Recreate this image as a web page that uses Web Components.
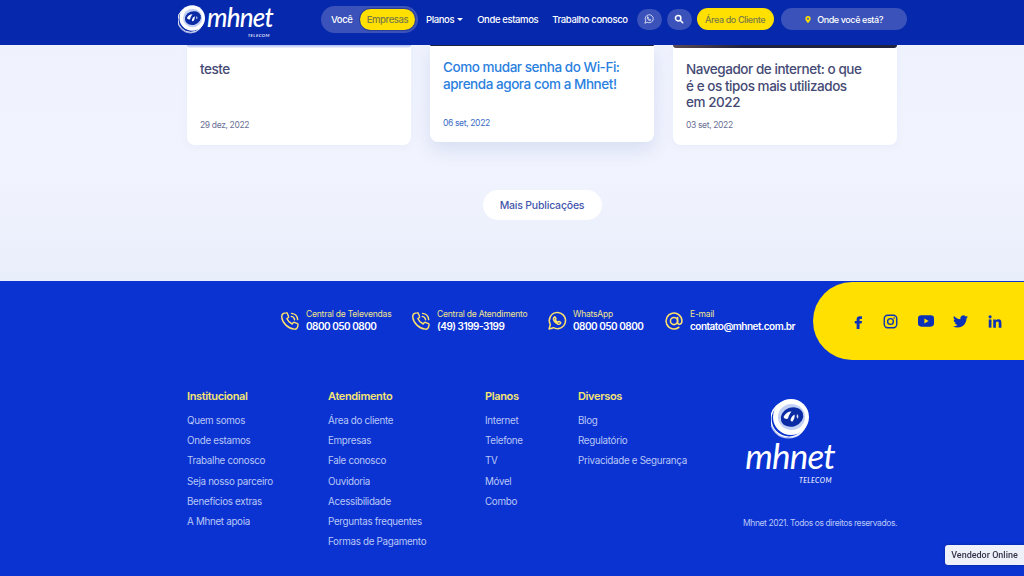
<!DOCTYPE html>
<html lang="pt-BR">
<head>
<meta charset="utf-8">
<title>Mhnet</title>
<style>
html,body{margin:0;padding:0;}
body{font-family:Inter,"Open Sans",sans-serif;background:#0b33d2;}
</style>
</head>
<body>
<site-header></site-header>
<blog-section>
  <blog-card date="29 dez, 2022" strip="linear-gradient(#a9bcf2,#f3f5fd)">teste</blog-card>
  <blog-card date="06 set, 2022" strip="#1d2340" active>Como mudar senha do Wi-Fi: aprenda agora com a Mhnet!</blog-card>
  <blog-card date="03 set, 2022" strip="linear-gradient(90deg,#5a4a50,#20233f 30%)" tall>Navegador de internet: o que é e os tipos mais utilizados em 2022</blog-card>
</blog-section>
<site-footer></site-footer>
<seller-button>Vendedor Online</seller-button>

<script>
const icons={
  phone:`<svg viewBox="0 0 24 24" fill="none" stroke="currentColor" stroke-width="1.7" stroke-linecap="round" stroke-linejoin="round"><path d="M5.2 2.6 7.6 2.2c.5-.1 1 .2 1.2.7l1.5 3.7c.2.4 0 .9-.3 1.200L8.300 9.200c1.100 2.600 3.500 5 6.300 6.400l1.500-1.700c.3-.3.8-.4 1.200-.3l3.700 1.500c.5.2.8.7.700 1.200l-.5 2.500c-.4 1.900-2.100 3.300-4 3C9.800 21.200 2.900 14.300 2.100 7.300 1.900 5 3.200 3 5.200 2.600z"/><path d="M13.500 6.500c2.200.3 3.700 1.800 4 4M13.800 2.900c4.200.4 7 3.200 7.400 7.400"/></svg>`,
  whats:`<svg viewBox="0 0 24 24" fill="none" stroke="currentColor" stroke-width="1.800" stroke-linecap="round" stroke-linejoin="round"><path d="M2.500 21.500 4 16.200A9.700 9.700 0 1 1 7.800 20z"/><path d="M9 7.500c-1.300.7-1.500 2.200-.8 3.700 1 2 2.600 3.500 4.700 4.400 1.500.6 3 .2 3.500-1.100.2-.5 0-.9-.4-1.100l-1.500-.8c-.4-.2-.7-.1-1 .2l-.5.600c-1.300-.5-2.400-1.500-3-2.800l.5-.6c.3-.3.3-.6.2-1l-.7-1.500c-.1-.5-.6-.7-1-.5z"/></svg>`,
  search:`<svg viewBox="0 0 24 24" fill="none" stroke="currentColor" stroke-width="3.600" stroke-linecap="round"><circle cx="10" cy="10" r="6.500"/><path d="m15.500 15.500 5.500 5.500"/></svg>`,
  pin:`<svg viewBox="0 0 24 24" fill="currentColor"><path fill-rule="evenodd" d="M12 1.500a8 8 0 0 0-8 8c0 5.500 8 13 8 13s8-7.500 8-13a8 8 0 0 0-8-8zm0 5a3 3 0 1 1 0 6 3 3 0 0 1 0-6z"/></svg>`,
  at:`<svg viewBox="0 0 24 24" fill="none" stroke="currentColor" stroke-width="1.900" stroke-linecap="round"><circle cx="12" cy="12" r="4.300"/><path d="M16.300 7.700v6c0 3.100 5.200 3.300 5.200-1.700a9.500 9.500 0 1 0-3.700 7.500"/></svg>`,
  fb:`<svg class="fb" viewBox="6 0 13 24" fill="currentColor"><path d="M14.500 8H18V3.500h-3.500C11.500 3.500 9.500 5.500 9.500 8.500V11H6.500v4.300h3V24h4.700v-8.700h3.200l.8-4.300h-4V8.900c0-.6.300-.9.800-.9z"/></svg>`,
  ig:`<svg class="ig" viewBox="0 0 24 24" fill="none" stroke="currentColor" stroke-width="2.200"><rect x="2" y="2" width="20" height="20" rx="5.500"/><circle cx="12" cy="12" r="4.600"/><circle cx="17.700" cy="6.300" r=".7" fill="currentColor" stroke-width="1"/></svg>`,
  yt:`<svg class="yt" viewBox="0 3 24 18"><rect x="0" y="3.500" width="24" height="17" rx="5" fill="currentColor"/><path d="M9.600 8.200v7.600l6.400-3.800z" fill="#ffe000"/></svg>`,
  tw:`<svg class="tw" viewBox="0 0 24 24" fill="currentColor"><path d="M23.953 4.570a10 10 0 0 1-2.825.775 4.958 4.958 0 0 0 2.163-2.723c-.951.555-2.005.959-3.127 1.184a4.920 4.920 0 0 0-8.384 4.482C7.690 8.095 4.067 6.130 1.640 3.162a4.822 4.822 0 0 0-.666 2.475c0 1.710.870 3.213 2.188 4.096a4.904 4.904 0 0 1-2.228-.616v.060a4.923 4.923 0 0 0 3.946 4.827 4.996 4.996 0 0 1-2.212.085 4.936 4.936 0 0 0 4.604 3.417 9.867 9.867 0 0 1-6.102 2.105c-.390 0-.779-.023-1.170-.067a13.995 13.995 0 0 0 7.557 2.209c9.053 0 13.998-7.496 13.998-13.985 0-.210 0-.420-.015-.630A9.935 9.935 0 0 0 24 4.590z"/></svg>`,
  li:`<svg class="li" viewBox="0 0 24 24" fill="currentColor"><circle cx="3.600" cy="4" r="2.700"/><rect x="1.300" y="8.500" width="4.600" height="14"/><path d="M9 8.500h4.400v2c.8-1.400 2.300-2.400 4.500-2.400 4.300 0 5.100 2.800 5.100 6.500v7.900h-4.600v-7c0-1.700 0-3.700-2.300-3.700s-2.600 1.800-2.600 3.600v7.100H9z"/></svg>`
};

class MhnetLogo extends HTMLElement{
  constructor(){
    super();
    this.attachShadow({mode:'open'});
    const stacked=this.hasAttribute('stacked');
    this.shadowRoot.innerHTML=`
    <style>
    :host{display:block;color:#fff;}
    .wrap{display:flex;align-items:center;gap:${stacked?'0':'2px'};flex-direction:${stacked?'column':'row'};}
    svg{display:block;flex:none;width:${stacked?'38px':'27px'};height:${stacked?'40px':'29px'};}
    .word{display:flex;flex-direction:column;align-items:flex-end;font-family:Lato,"Liberation Sans",sans-serif;font-style:italic;${stacked?'margin-top:-5.500px;':''}}
    .name{font-size:${stacked?'35px':'26px'};letter-spacing:-.8px;line-height:normal;}
    .sub{font-size:${stacked?'7px':'4.500px'};line-height:normal;letter-spacing:.4px;padding-right:3px;}
    </style>
    <div class="wrap">
      <svg viewBox="0 0 38 40">
        <g fill="none" stroke="#fff" stroke-width="1.200">
          <circle cx="18" cy="20" r="18"/>
          <circle cx="17.500" cy="21" r="18" opacity=".7"/>
        </g>
        <circle cx="20" cy="18" r="18" fill="#fff"/>
        <ellipse cx="20.500" cy="18" rx="13.500" ry="13" fill="#c3d0f6"/>
        <ellipse cx="21" cy="18" rx="11.500" ry="9.500" fill="#0a2ba3" transform="rotate(-20 21 18)"/>
        <path d="M12.500 18c1.500-3.500 4.500-5.500 8-5.500-1.500 2-3 4-3.500 7-1.500.8-3.500.5-4.500-1.500z" fill="#fff"/>
        <path d="M19.500 21c.5-2.500 2-4.500 4-5.500.5 2-.2 5-2 7-1 .2-1.800-.5-2-1.500z" fill="#fff"/>
        <path d="M26 15c1.500 1 1.700 3 .8 4.800-.6-.6-1-1.200-1.200-2z" fill="#fff" opacity=".85"/>
      </svg>
      <div class="word"><span class="name">mhnet</span><span class="sub">TELECOM</span></div>
    </div>`;
  }
}
customElements.define('mhnet-logo',MhnetLogo);

class SiteHeader extends HTMLElement{
  constructor(){
    super();
    this.attachShadow({mode:'open'});
    this.shadowRoot.innerHTML=`
    <style>
    :host{display:block;position:fixed;top:0;left:0;right:0;height:45px;background:#0528ad;z-index:5;}
    nav{display:flex;align-items:center;height:38px;padding-left:178px;font-size:9.500px;font-weight:500;letter-spacing:-.38px;color:#fff;}
    mhnet-logo{width:94px;margin-right:49px;}
    .toggle{display:flex;align-items:center;width:97px;height:27px;box-sizing:border-box;border-radius:14px;background:#3a52b9;padding-left:10px;}
    .toggle b{font-weight:500;width:29px;}
    .toggle span{width:55px;height:21px;border-radius:11px;background:#ffe000;color:#787a48;display:flex;align-items:center;justify-content:center;box-shadow:0 0 0 1px #2b3f96;}
    .link{margin-left:14px;white-space:nowrap;}
    .link i{display:inline-block;border:3px solid transparent;border-top-color:#fff;border-bottom:0;margin-left:3px;vertical-align:2px;}
    .round{flex:none;width:25px;height:21px;border-radius:11px;background:#3a52b9;display:flex;align-items:center;justify-content:center;margin-left:5px;}
    .round svg{width:10px;height:10px;}
    .client{flex:none;width:77px;height:22px;margin-left:5px;border-radius:11px;background:#ffe000;color:#787a48;display:flex;align-items:center;justify-content:center;white-space:nowrap;font-size:9px;letter-spacing:-.4px;}
    .where{flex:none;width:126px;height:22px;margin-left:7px;border-radius:11px;background:#3a52b9;display:flex;align-items:center;justify-content:center;gap:5px;font-size:9px;letter-spacing:-.4px;white-space:nowrap;}
    .where svg{width:8px;height:9px;color:#ffe000;}
    .right{display:flex;align-items:center;margin-left:9px;}
    .right>:first-child{margin-left:0;}
    </style>
    <nav>
      <mhnet-logo></mhnet-logo>
      <div class="toggle"><b>Você</b><span>Empresas</span></div>
      <a class="link" style="margin-left:8px">Planos<i></i></a>
      <a class="link">Onde estamos</a>
      <a class="link">Trabalho conosco</a>
      <div class="right">
        <div class="round">${icons.whats}</div>
        <div class="round">${icons.search}</div>
        <div class="client">Área do Cliente</div>
        <div class="where">${icons.pin}<span>Onde você está?</span></div>
      </div>
    </nav>`;
  }
}
customElements.define('site-header',SiteHeader);

class BlogSection extends HTMLElement{
  constructor(){
    super();
    this.attachShadow({mode:'open'});
    this.shadowRoot.innerHTML=`
    <style>
    :host{display:block;height:281px;box-sizing:border-box;padding:45px 0 0 187px;background:linear-gradient(#eef2fd,#f1f4fe 60%,#e9eefb);}
    .inner{width:710px;}
    .cards{display:grid;grid-template-columns:repeat(3,224px);column-gap:19px;align-items:start;}
    .more{display:flex;justify-content:center;margin-top:45px;}
    .more a{display:flex;align-items:center;justify-content:center;width:119px;height:30px;border-radius:15px;background:#fff;color:#4356ad;font-size:10.500px;font-weight:500;letter-spacing:-.2px;}
    </style>
    <div class="inner">
      <div class="cards"><slot></slot></div>
      <div class="more"><a>Mais Publicações</a></div>
    </div>`;
  }
}
customElements.define('blog-section',BlogSection);

class BlogCard extends HTMLElement{
  constructor(){
    super();
    this.attachShadow({mode:'open'});
    const active=this.hasAttribute('active');
    this.shadowRoot.innerHTML=`
    <style>
    :host{display:block;height:${active?'97px':'100px'};background:#fff;border-radius:0 0 8px 8px;box-shadow:${active?'0 8px 18px rgba(70,90,170,.14)':'0 2px 8px rgba(70,90,170,.05)'};overflow:hidden;}
    .strip{height:${active?'1px':'3px'};background:${this.getAttribute('strip')};border-radius:0 0 5px 5px;}
    .body{display:flex;flex-direction:column;box-sizing:border-box;padding:13px 13px 0 13px;}
    h3{margin:0;font-size:13.500px;line-height:16.700px;font-weight:500;letter-spacing:-.45px;color:${active?'#2b7fe0':'#454a74'};height:51px;${this.hasAttribute('tall')?'padding-right:18px;':''}}
    time{margin-top:7px;font-size:8.500px;letter-spacing:-.35px;color:${active?'#3a6bc6':'#6a6f94'};line-height:12px;}
    </style>
    <div class="strip"></div>
    <div class="body"><h3><slot></slot></h3><time>${this.getAttribute('date')}</time></div>`;
  }
}
customElements.define('blog-card',BlogCard);

class ContactItem extends HTMLElement{
  constructor(){
    super();
    this.attachShadow({mode:'open'});
    this.shadowRoot.innerHTML=`
    <style>
    :host{display:flex;align-items:center;gap:6px;white-space:nowrap;}
    svg{display:block;width:20px;height:20px;color:#ffe36a;flex:none;}
    div{display:flex;flex-direction:column;}
    small{font-size:8.500px;line-height:11px;letter-spacing:-.2px;color:#f1e58a;}
    strong{font-size:10px;line-height:13px;font-weight:600;letter-spacing:-.5px;color:#fff;}
    </style>
    ${icons[this.getAttribute('icon')]}
    <div><small>${this.getAttribute('label')}</small><strong>${this.getAttribute('value')}</strong></div>`;
  }
}
customElements.define('contact-item',ContactItem);

class FooterCol extends HTMLElement{
  constructor(){
    super();
    this.attachShadow({mode:'open'});
    const links=this.getAttribute('links').split('|').map(l=>`<li>${l}</li>`).join('');
    this.shadowRoot.innerHTML=`
    <style>
    :host{display:block;white-space:nowrap;}
    h4{margin:0 0 7px;font-size:11px;line-height:16px;font-weight:600;letter-spacing:-.35px;color:#f6e572;}
    ul{list-style:none;margin:0;padding:0;}
    li{font-size:9.800px;line-height:20.200px;letter-spacing:-.3px;color:#b9c7f6;}
    </style>
    <h4>${this.getAttribute('title')}</h4><ul>${links}</ul>`;
  }
}
customElements.define('footer-col',FooterCol);

class SiteFooter extends HTMLElement{
  constructor(){
    super();
    this.attachShadow({mode:'open'});
    this.shadowRoot.innerHTML=`
    <style>
    :host{display:block;height:295px;background:#0b33d2;overflow:hidden;}
    .top{display:flex;align-items:center;height:79px;padding-left:280px;}
    contact-item:nth-child(1){width:131px;}
    contact-item:nth-child(2){width:136px;}
    contact-item:nth-child(3){width:117px;}
    contact-item:nth-child(4){width:149px;}
    .social{display:flex;align-items:center;gap:20px;box-sizing:border-box;width:211px;height:78px;margin-top:1px;border-radius:39px 0 0 39px;background:#ffe000;padding-left:41px;color:#0a31b8;}
    .social svg{display:block;flex:none;height:15px;}
    .social .fb{width:9px;}
    .social .ig{width:15px;}
    .social .yt{width:16px;height:12px;margin-right:-1px;}
    .social .tw{width:15px;}
    .social .li{width:14px;}
    .main{display:grid;grid-template-columns:141px 157px 93px 165px 1fr;padding:28px 127px 0 187px;}
    .brand{display:flex;flex-direction:column;height:141px;}
    mhnet-logo{margin:11px 0 0 2px;width:90px;}
    .brand p{margin:auto 0 0;font-size:8.500px;line-height:12px;letter-spacing:-.4px;color:#b9c7f6;white-space:nowrap;}
    </style>
    <div class="top">
      <contact-item icon="phone" label="Central de Televendas" value="0800 050 0800"></contact-item>
      <contact-item icon="phone" label="Central de Atendimento" value="(49) 3199-3199"></contact-item>
      <contact-item icon="whats" label="WhatsApp" value="0800 050 0800"></contact-item>
      <contact-item icon="at" label="E-mail" value="contato@mhnet.com.br"></contact-item>
      <div class="social">${icons.fb}${icons.ig}${icons.yt}${icons.tw}${icons.li}</div>
    </div>
    <div class="main">
      <footer-col title="Institucional" links="Quem somos|Onde estamos|Trabalhe conosco|Seja nosso parceiro|Benefícios extras|A Mhnet apoia"></footer-col>
      <footer-col title="Atendimento" links="Área do cliente|Empresas|Fale conosco|Ouvidoria|Acessibilidade|Perguntas frequentes|Formas de Pagamento"></footer-col>
      <footer-col title="Planos" links="Internet|Telefone|TV|Móvel|Combo"></footer-col>
      <footer-col title="Diversos" links="Blog|Regulatório|Privacidade e Segurança"></footer-col>
      <div class="brand">
        <mhnet-logo stacked></mhnet-logo>
        <p>Mhnet 2021. Todos os direitos reservados.</p>
      </div>
    </div>`;
  }
}
customElements.define('site-footer',SiteFooter);

class SellerButton extends HTMLElement{
  constructor(){
    super();
    this.attachShadow({mode:'open'});
    this.shadowRoot.innerHTML=`
    <style>
    :host{position:fixed;right:0;bottom:11px;width:79px;height:20px;display:flex;align-items:center;justify-content:center;background:#eef0fa;border-radius:3px 0 0 3px;font-family:Roboto,sans-serif;font-size:9px;font-weight:500;color:#33364a;box-shadow:0 0 3px rgba(0,0,0,.3);z-index:6;}
    </style>
    <slot></slot>`;
  }
}
customElements.define('seller-button',SellerButton);
</script>
</body>
</html>
